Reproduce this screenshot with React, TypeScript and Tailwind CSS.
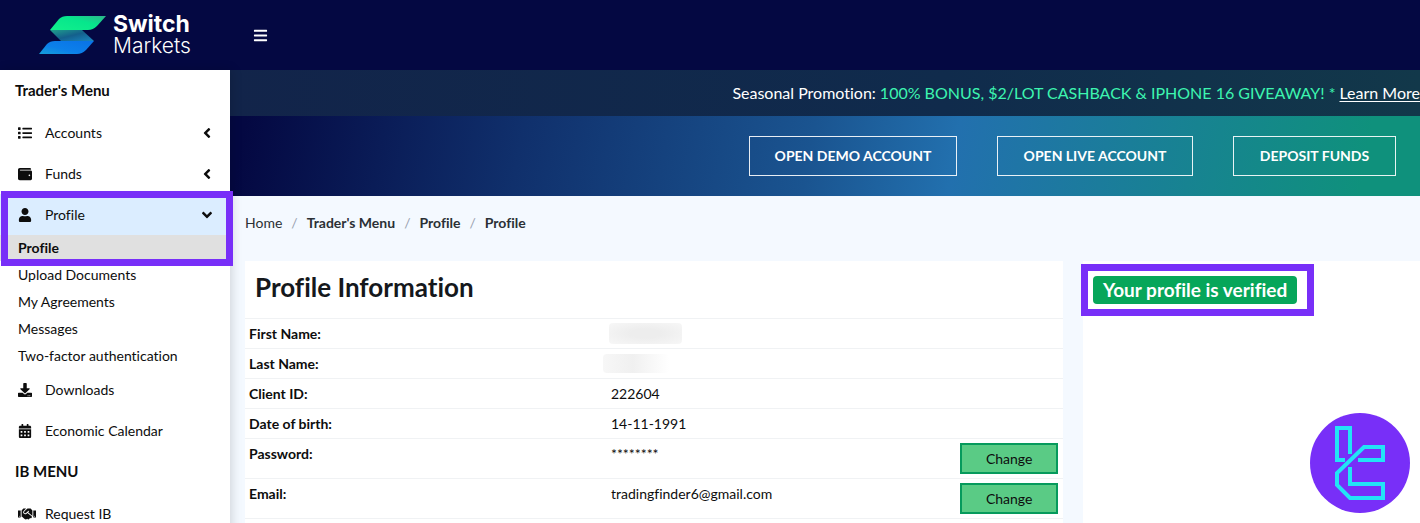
import type { ReactNode } from "react";
import {
  FaAngleDown,
  FaAngleLeft,
  FaBars,
  FaCalendarAlt,
  FaDownload,
  FaHandshake,
  FaList,
  FaUser,
  FaWallet,
} from "react-icons/fa";

const Logo = () => (
  <a href="#" aria-label="Switch Markets" className="flex w-[230px] items-center pl-[39px]">
    <svg viewBox="0 0 68 40" className="h-10 w-[68px]" aria-hidden="true">
      <defs>
        <linearGradient id="top" x1="0" y1="1" x2="1" y2="0">
          <stop offset="0" stopColor="#12f08c" />
          <stop offset="0.6" stopColor="#06e68c" />
          <stop offset="1" stopColor="#2fb58c" />
        </linearGradient>
        <linearGradient id="fold" x1="0" y1="0" x2="1" y2="1">
          <stop offset="0" stopColor="#1fa08c" />
          <stop offset="0.5" stopColor="#14608c" />
          <stop offset="1" stopColor="#1a86c0" />
        </linearGradient>
        <linearGradient id="bottom" x1="1" y1="0" x2="0" y2="1">
          <stop offset="0" stopColor="#0a72e6" />
          <stop offset="0.6" stopColor="#0c80ea" />
          <stop offset="1" stopColor="#16a0d8" />
        </linearGradient>
      </defs>
      <path d="M11 15 L43 15 L55 26 L22 26 Z" fill="url(#fold)" />
      <path d="M11 15 L20 4 Q23 1 28 1 H67 L58 11 Q54 15 49 15 Z" fill="url(#top)" />
      <path d="M55 26 L47 35 Q43 39 38 39 H0 L8 29 Q11 26 16 26 Z" fill="url(#bottom)" />
    </svg>
    <span className="flex flex-col pl-[6px] font-[Inter] leading-[22px] text-white">
      <span className="text-[23px] font-bold">Switch</span>
      <span className="text-[21px] font-light">Markets</span>
    </span>
  </a>
);

interface menuItemInterface {
  icon: ReactNode;
  label: string;
  arrow?: "left" | "down";
  active?: boolean;
}

const MenuItem = ({ icon, label, arrow, active }: menuItemInterface) => (
  <a
    href="#"
    className={`flex h-[41px] items-center pl-[18px] pr-[15px] ${active ? "bg-[#dbedff]" : ""}`}
  >
    <span className="w-[27px] text-sm">{icon}</span>
    <span className="flex-1">{label}</span>
    {arrow === "left" && <FaAngleLeft className="text-base" />}
    {arrow === "down" && <FaAngleDown className="text-base" />}
  </a>
);

const subItems = ["Upload Documents", "My Agreements", "Messages", "Two-factor authentication"];

const Sidebar = () => (
  <nav className="z-10 w-[230px] shrink-0 bg-white text-sm text-[#0d0d0d] shadow-[2px_0_10px_rgba(0,0,0,0.15)]">
    <h2 className="flex h-[42px] items-center pl-[15px] text-[15px] font-bold">Trader's Menu</h2>
    <MenuItem icon={<FaList />} label="Accounts" arrow="left" />
    <MenuItem icon={<FaWallet />} label="Funds" arrow="left" />
    <div className="relative">
      <MenuItem icon={<FaUser />} label="Profile" arrow="down" active />
      <a href="#" className="flex h-[26px] items-center bg-[#e0e0e0] pl-[18px] font-bold">
        Profile
      </a>
      {/* highlight frame */}
      <div className="pointer-events-none absolute -top-[3px] -bottom-[5px] left-[1px] -right-[3px] border-[7px] border-[#782ff8]" />
    </div>
    {subItems.map((item) => (
      <a key={item} href="#" className="flex h-[27px] items-center pl-[18px]">
        {item}
      </a>
    ))}
    <MenuItem icon={<FaDownload />} label="Downloads" />
    <MenuItem icon={<FaCalendarAlt />} label="Economic Calendar" />
    <h2 className="flex h-[42px] items-center pl-[15px] text-[15px] font-bold">IB MENU</h2>
    <MenuItem icon={<FaHandshake className="text-lg" />} label="Request IB" />
  </nav>
);

const Banner = () => (
  <div className="bg-[linear-gradient(100deg,#040842_2%,#10306c_25%,#1a5490_49%,#2270ae_61%,#0f917c_95%)]">
    <p className="flex h-[46px] items-center justify-end gap-1 bg-[linear-gradient(90deg,#12244a,#102b4c_60%,#12384a)] text-base whitespace-nowrap text-white">
      Seasonal Promotion:
      <span className="text-[#3df5b0]">100% BONUS, $2/LOT CASHBACK &amp; IPHONE 16 GIVEAWAY! *</span>
      <a href="#" className="underline underline-offset-2">Learn More</a>
    </p>
    <div className="flex h-20 items-center justify-end gap-10 pr-6 text-sm font-bold text-white">
      <button className="h-10 w-52 border border-white/90">OPEN DEMO ACCOUNT</button>
      <button className="h-10 w-[196px] border border-white/90">OPEN LIVE ACCOUNT</button>
      <button className="h-10 w-[163px] border border-white/90">DEPOSIT FUNDS</button>
    </div>
  </div>
);

const crumbs = ["Trader's Menu", "Profile", "Profile"];

const Breadcrumbs = () => (
  <nav aria-label="Breadcrumb" className="flex h-[65px] items-center pb-[11px] text-sm text-[#2b3035]">
    <a href="#">Home</a>
    {crumbs.map((crumb, i) => (
      <span key={i} className="font-bold">
        <span className="px-[9px] font-normal text-gray-400">/</span>
        {crumb}
      </span>
    ))}
  </nav>
);

interface rowInterface {
  label: string;
  value: ReactNode;
  change?: boolean;
}

// names are hidden behind a soft grey patch
const rows: rowInterface[] = [
  {
    label: "First Name:",
    value: <div className="-ml-[2px] h-[21px] w-[73px] rounded bg-[radial-gradient(ellipse,#ededed_30%,#f7f7f7_100%)]" />,
  },
  {
    label: "Last Name:",
    value: <div className="-ml-2 h-[19px] w-[66px] rounded bg-[linear-gradient(90deg,#f7f7f7,#f0f0f0_45%,#ffffff)]" />,
  },
  { label: "Client ID:", value: "222604" },
  { label: "Date of birth:", value: "14-11-1991" },
  { label: "Password:", value: "********", change: true },
  { label: "Email:", value: "tradingfinder6@gmail.com", change: true },
];

const ProfileCard = () => (
  <section className="bg-white">
    <h1 className="flex h-[57px] items-center pl-[10px] pb-1 text-[26px] font-bold text-[#15181c]">
      Profile Information
    </h1>
    <table className="w-full table-fixed border-b border-[#f0f2f4] text-left text-sm text-[#0d0d0d]">
      <tbody>
        {rows.map((row) => (
          <tr key={row.label} className="border-t border-[#f0f2f4]">
            <th scope="row" className={`w-[44%] pl-1 align-top font-bold leading-[29px] ${row.change ? "h-10" : "h-[30px]"}`}>
              {row.label}
            </th>
            <td className="pl-[6px] align-top leading-[29px]">
              {typeof row.value === "string" ? row.value : <div className="flex h-[29px] items-center">{row.value}</div>}
            </td>
            <td className="w-[108px] pr-[5px] align-middle">
              {row.change && (
                <button className="ml-auto block h-[31px] w-[98px] border-2 border-[#069a5c] bg-[#5acb85]">
                  Change
                </button>
              )}
            </td>
          </tr>
        ))}
      </tbody>
    </table>
  </section>
);

const StatusCard = () => (
  <aside className="relative bg-white">
    <span className="mt-[15px] ml-[10px] flex h-7 w-[204px] items-center justify-center rounded bg-[#06a65a] text-[19px] font-bold whitespace-nowrap text-white">
      Your profile is verified
    </span>
    <div className="pointer-events-none absolute top-[3px] -left-[2px] h-[52px] w-[233px] border-[7px] border-[#782ff8]" />
  </aside>
);

const Watermark = () => (
  <svg viewBox="0 0 100 100" className="fixed right-[10px] bottom-[10px] z-20 size-[100px]" aria-hidden="true">
    <circle cx="50" cy="50" r="50" fill="#782ff8" />
    <g fill="none" stroke="#22e4f6" strokeWidth="4">
      <path d="M40 41 V15 H27 V47 H35" />
      <path d="M48 47 H73 V34 H54 L27 60 V72 L40 85 H73 V71 H40 V54" />
    </g>
  </svg>
);

export default function App() {
  return (
    <div className="flex h-screen flex-col overflow-hidden bg-[#f4f9ff] font-[Lato,sans-serif] [font-variant-ligatures:no-common-ligatures]">
      <header className="flex h-[70px] shrink-0 bg-[#040842]">
        <Logo />
        <button aria-label="Toggle menu" className="ml-[23px] text-[15px] text-white">
          <FaBars />
        </button>
      </header>
      <div className="flex flex-1">
        <Sidebar />
        <div className="flex min-w-0 flex-1 flex-col">
          <Banner />
          <main className="flex flex-1 flex-col pl-[15px]">
            <Breadcrumbs />
            <div className="grid flex-1 grid-cols-[17fr_7fr] gap-5">
              <ProfileCard />
              <StatusCard />
            </div>
          </main>
        </div>
      </div>
      <Watermark />
    </div>
  );
}
